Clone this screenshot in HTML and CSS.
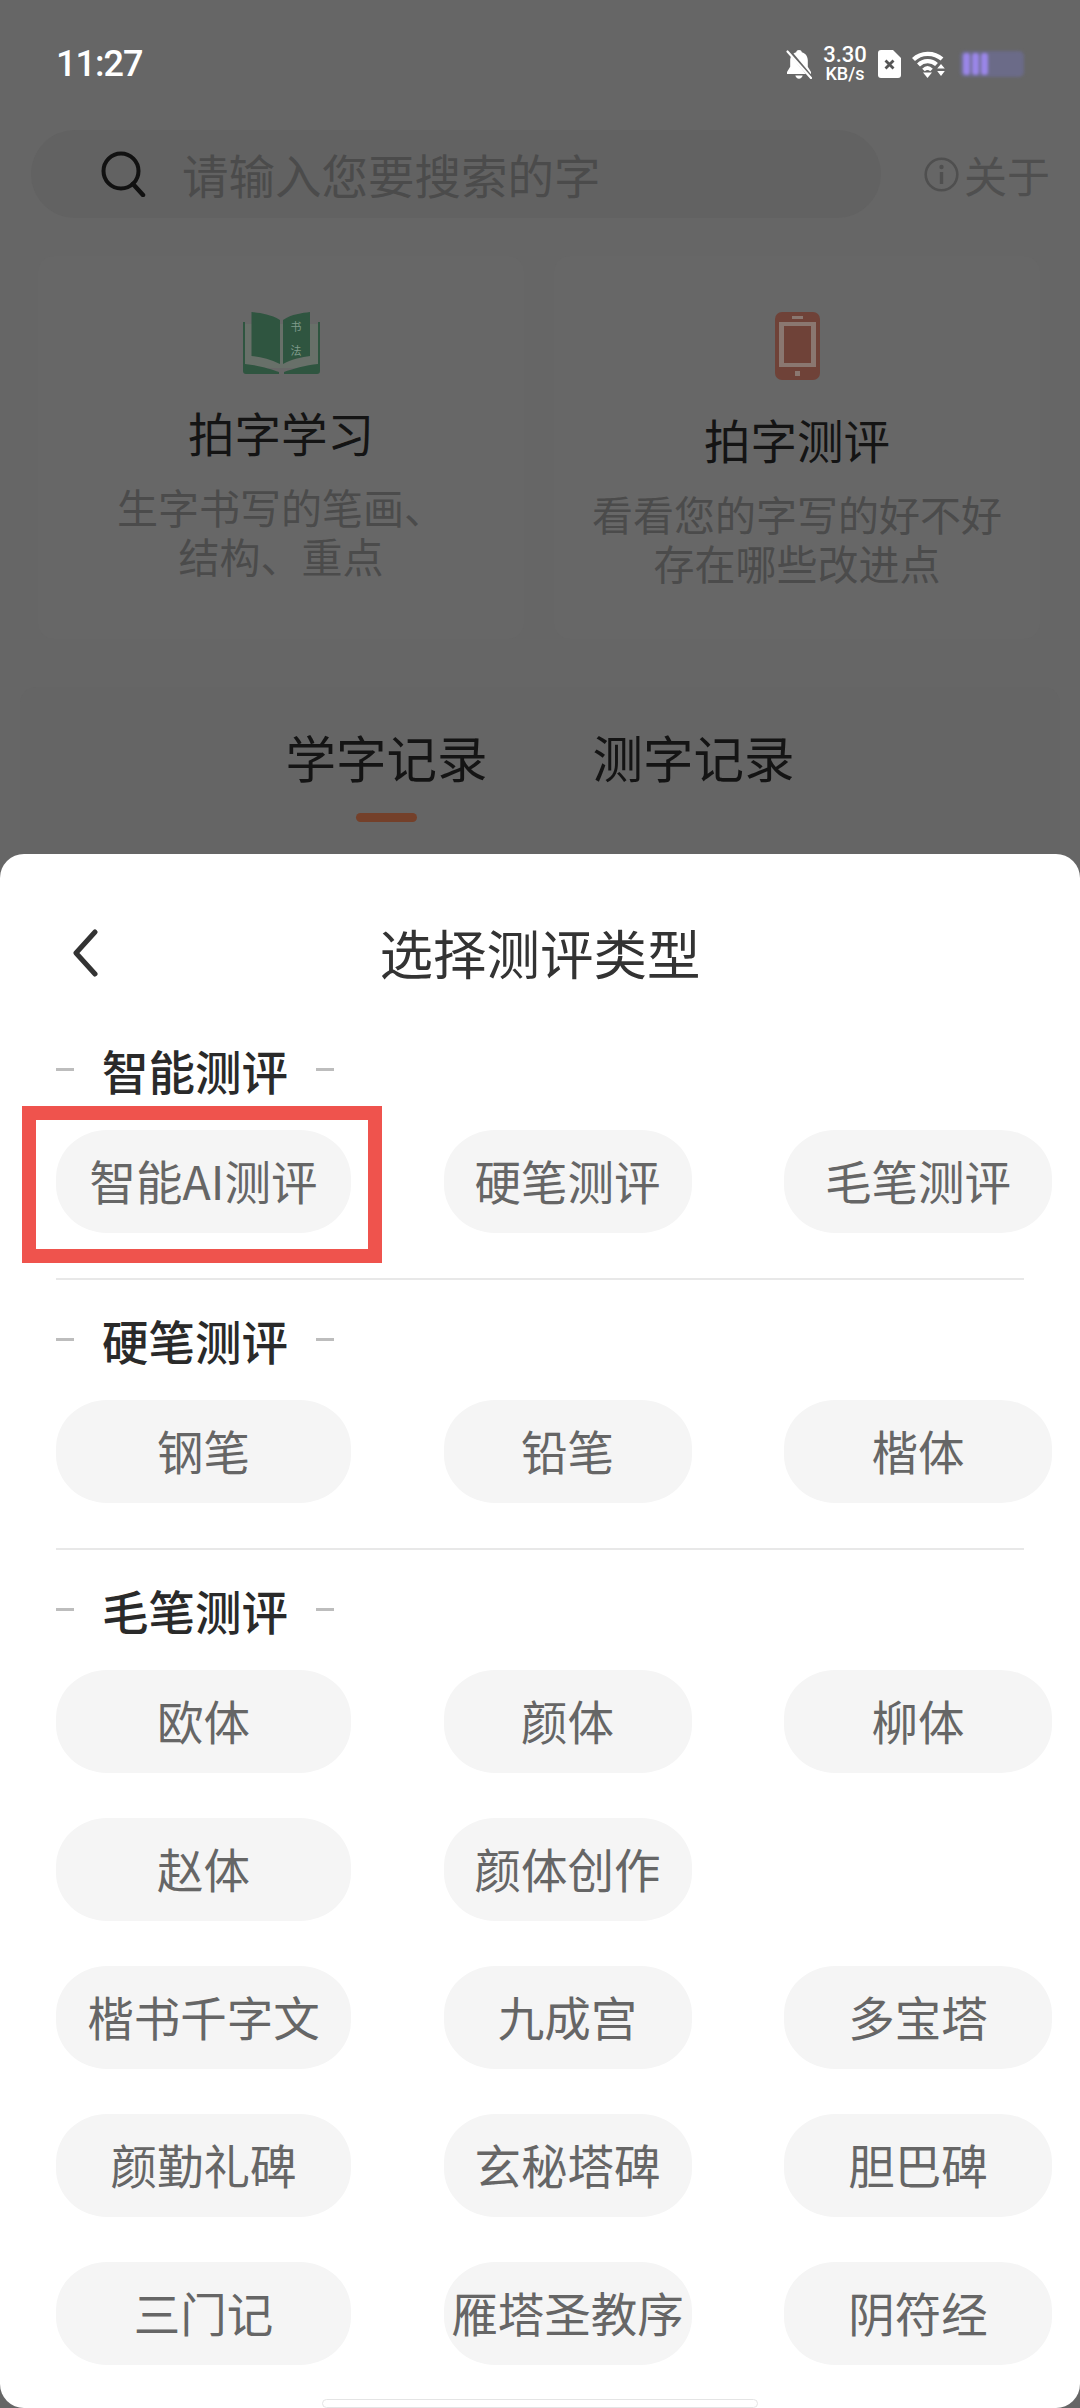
FILE: index.html
```html
<!DOCTYPE html>
<html lang="zh-CN">
<head>
    <meta charset="UTF-8">
    <meta name="viewport" content="width=device-width, initial-scale=1.0">
    <title>选择测评类型</title>
    <link rel="stylesheet" href="styles.css">
</head>
<body>
    <div class="screen">
        <div class="backdrop">
            <div class="status-bar">
                <span class="time">11:27</span>
                <div class="status-icons">
                    <svg class="icon-bell" viewBox="0 0 26 29">
                        <path d="M13 0c1.600 0 2.600.9 2.800 2.200 3.900 1.100 6 4.200 6 8.300v6.200l3.200 5.300v2H1v-2l3.200-5.300v-6.200c0-4.100 2.100-7.200 6-8.300C10.400.9 11.400 0 13 0z" fill="#fff"/>
                        <path d="M9.300 25.500h7.400c-.5 2-1.900 3.200-3.700 3.200s-3.200-1.200-3.700-3.200z" fill="#fff"/>
                        <path d="M3 1l22 26" stroke="#666" stroke-width="3.600"/>
                        <path d="M1.500 1.500l23.500 26.500" stroke="#fff" stroke-width="2.200" stroke-linecap="round"/>
                    </svg>
                    <div class="net-speed">
                        <span class="net-value">3.30</span>
                        <span class="net-unit">KB/s</span>
                    </div>
                    <svg class="icon-sim" viewBox="0 0 23 28">
                        <path d="M3 0h12l8 8v17a3 3 0 0 1-3 3H3a3 3 0 0 1-3-3V3a3 3 0 0 1 3-3z" fill="#fff"/>
                        <path d="M7.500 10.500l8 8m0-8l-8 8" stroke="#555" stroke-width="2.800"/>
                    </svg>
                    <svg class="icon-wifi" viewBox="0 0 33 27">
                        <path d="M1.500 8.500C9 1 22 1 30 8" fill="none" stroke="#fff" stroke-width="4.200"/>
                        <path d="M6.500 14C11.500 9 19.500 9 24.500 13.500" fill="none" stroke="#fff" stroke-width="4.200"/>
                        <path d="M11.500 19c2.500-2.400 5.500-2.400 8 0" fill="none" stroke="#fff" stroke-width="3.800"/>
                        <path d="M11 21.500h9l-4.500 5.500z" fill="#fff"/>
                        <path d="M29 13l3.800 4.600h-7.600zM25.200 20h7.600L29 25z" fill="#fff"/>
                    </svg>
                    <div class="battery">
                        <span class="battery-cell"></span>
                        <span class="battery-cell"></span>
                        <span class="battery-cell"></span>
                    </div>
                </div>
            </div>

            <div class="search-row">
                <div class="search-box">
                    <svg class="icon-search" viewBox="0 0 46 46">
                        <circle cx="21" cy="20" r="17.500" fill="none" stroke="#111" stroke-width="4"/>
                        <path d="M33 33l10 11" stroke="#111" stroke-width="4.500" stroke-linecap="round"/>
                    </svg>
                    <span class="search-text">请输入您要搜索的字</span>
                </div>
                <div class="about">
                    <svg class="icon-info" viewBox="0 0 35 35">
                        <circle cx="17.500" cy="17.500" r="15.800" fill="none" stroke="#4f4f4f" stroke-width="2.600"/>
                        <circle cx="17.500" cy="10" r="2.200" fill="#4f4f4f"/>
                        <path d="M17.500 15v12" stroke="#4f4f4f" stroke-width="3.400"/>
                    </svg>
                    <span>关于</span>
                </div>
            </div>

            <div class="cards">
                <div class="card">
                    <svg class="icon-book" viewBox="0 0 77 62">
                        <path d="M2 12h73v44H2z" fill="#687069"/>
                        <path d="M8.500 0C17 1 27 2 37 8v44C27 47 17 45 8.500 44z" fill="#2f5540"/>
                        <path d="M40 8C49 2 59 1 67 0v44c-8 1-18 3-27 8z" fill="#2f5540"/>
                        <path d="M0 10h2v42c12 1 26 5 34 8v2H3q-3 0-3-3z" fill="#2f5540"/>
                        <path d="M77 10h-2v42c-12 1-26 5-34 8v2h33q3 0 3-3z" fill="#2f5540"/>
                        <text class="book-label" x="53" y="19">书</text>
                        <text class="book-label" x="53" y="43">法</text>
                    </svg>
                    <div class="card-title">拍字学习</div>
                    <div class="card-desc">生字书写的笔画、<br>结构、重点</div>
                </div>
                <div class="card">
                    <svg class="icon-phone" viewBox="0 0 45 68">
                        <rect width="45" height="68" rx="7" fill="#6f4238"/>
                        <rect x="4" y="10" width="37" height="45" fill="#8a7770"/>
                        <rect x="9" y="14" width="27" height="37" fill="#6f4238"/>
                        <rect x="17" y="4" width="11" height="3" fill="#8a7770"/>
                        <rect x="20" y="59" width="5" height="5" fill="#8a7770"/>
                    </svg>
                    <div class="card-title">拍字测评</div>
                    <div class="card-desc">看看您的字写的好不好<br>存在哪些改进点</div>
                </div>
            </div>

            <div class="records">
                <div class="tab">
                    <span>学字记录</span>
                    <span class="tab-line"></span>
                </div>
                <div class="tab">
                    <span>测字记录</span>
                </div>
            </div>
        </div>

        <div class="sheet">
            <div class="sheet-header">
                <svg class="icon-back" viewBox="0 0 28 48">
                    <path d="M24 3L5 24l19 21" fill="none" stroke="#333" stroke-width="5" stroke-linecap="round" stroke-linejoin="round"/>
                </svg>
                <span>选择测评类型</span>
            </div>

            <div class="section">
                <div class="section-title">智能测评</div>
                <div class="pills">
                    <div class="pill">智能AI测评<span class="marker"></span></div>
                    <div class="pill">硬笔测评</div>
                    <div class="pill">毛笔测评</div>
                </div>
            </div>

            <div class="section">
                <div class="section-title">硬笔测评</div>
                <div class="pills">
                    <div class="pill">钢笔</div>
                    <div class="pill">铅笔</div>
                    <div class="pill">楷体</div>
                </div>
            </div>

            <div class="section section-last">
                <div class="section-title">毛笔测评</div>
                <div class="pills">
                    <div class="pill">欧体</div>
                    <div class="pill">颜体</div>
                    <div class="pill">柳体</div>
                    <div class="pill">赵体</div>
                    <div class="pill">颜体创作</div>
                    <div class="pill-empty"></div>
                    <div class="pill">楷书千字文</div>
                    <div class="pill">九成宫</div>
                    <div class="pill">多宝塔</div>
                    <div class="pill">颜勤礼碑</div>
                    <div class="pill">玄秘塔碑</div>
                    <div class="pill">胆巴碑</div>
                    <div class="pill">三门记</div>
                    <div class="pill">雁塔圣教序</div>
                    <div class="pill">阴符经</div>
                </div>
            </div>

            <div class="home-bar"></div>
        </div>
    </div>
</body>
</html>
```

FILE: styles.css
```css
* {
    box-sizing: border-box;
}

body {
    margin: 0;
    background-color: #4d4d4d;
    font-family: "Noto Sans CJK SC", "Noto Sans", sans-serif;
}

.screen {
    width: 1080px;
    height: 2408px;
    display: flex;
    flex-direction: column;
    overflow: hidden;
    background-color: #666;
}

.backdrop {
    height: 854px;
    flex: none;
    overflow: hidden;
}

/* status bar */
.status-bar {
    height: 130px;
    padding: 0 56px 2px;
    display: flex;
    align-items: center;
    justify-content: space-between;
    color: #fff;
}

.time {
    font-family: Roboto, sans-serif;
    font-size: 36px;
    font-weight: 500;
    letter-spacing: -1px;
}

.status-icons {
    display: flex;
    align-items: center;
    gap: 11px;
}

.icon-bell {
    width: 26px;
    height: 29px;
}

.net-speed {
    width: 44px;
    display: flex;
    flex-direction: column;
    align-items: center;
    font-family: Roboto, sans-serif;
    font-weight: 500;
}

.net-value {
    font-size: 22px;
    line-height: 20px;
}

.net-unit {
    font-size: 18px;
    line-height: 18px;
}

.icon-sim {
    width: 23px;
    height: 28px;
}

.icon-wifi {
    width: 33px;
    height: 27px;
}

.battery {
    width: 64px;
    height: 26px;
    margin-left: 4px;
    padding: 2px 3px;
    display: flex;
    gap: 2px;
    background-color: #6b6b88;
    border-radius: 5px;
    filter: blur(1.5px);
}

.battery-cell {
    width: 7px;
    background-color: #9a86e8;
    border-radius: 3px;
}

/* search */
.search-row {
    height: 88px;
    padding-left: 31px;
    display: flex;
    align-items: center;
    gap: 43px;
}

.search-box {
    width: 850px;
    height: 88px;
    padding-left: 69px;
    display: flex;
    align-items: center;
    gap: 36px;
    background-color: #626262;
    border-radius: 44px;
}

.icon-search {
    width: 46px;
    height: 46px;
}

.search-text {
    font-size: 46.5px;
    color: #4b4b4b;
    line-height: 48px;
}

.about {
    display: flex;
    align-items: center;
    gap: 5px;
    font-size: 43px;
    line-height: 50px;
    color: #4f4f4f;
}

.icon-info {
    width: 35px;
    height: 35px;
}

/* cards */
.cards {
    height: 383px;
    margin: 38px 40px 48px 38px;
    display: flex;
    gap: 30px;
}

.card {
    flex: 1;
    padding-top: 56px;
    display: flex;
    flex-direction: column;
    align-items: center;
    background-color: #676767;
    border-radius: 16px;
}

.icon-book {
    width: 77px;
    height: 62px;
    margin-bottom: 35px;
}

.icon-phone {
    width: 45px;
    height: 68px;
    margin-bottom: 36px;
}

.book-label {
    font-size: 11px;
    fill: #7f9a8a;
    text-anchor: middle;
}

.card-title {
    font-size: 46.5px;
    line-height: 46px;
    color: #141414;
    margin-bottom: 27px;
}

.card-desc {
    font-size: 41px;
    line-height: 49px;
    color: #4b4b4b;
    text-align: center;
}

/* records */
.records {
    height: 200px;
    margin: 0 20px;
    padding-top: 44px;
    display: flex;
    justify-content: center;
    gap: 105px;
    background-color: #656565;
    border-radius: 16px 16px 0 0;
}

.tab {
    display: flex;
    flex-direction: column;
    align-items: center;
    font-size: 50.5px;
    line-height: 50px;
    color: #141414;
}

.tab-line {
    width: 61px;
    height: 9px;
    margin-top: 32px;
    background-color: #74402a;
    border-radius: 5px;
}

/* bottom sheet */
.sheet {
    flex: 1;
    background-color: #fff;
    border-radius: 24px;
    display: flex;
    flex-direction: column;
}

.sheet-header {
    height: 192px;
    padding-top: 2px;
    position: relative;
    display: flex;
    align-items: center;
    justify-content: center;
    font-size: 53.5px;
    color: #333;
}

.icon-back {
    position: absolute;
    left: 71px;
    top: 75px;
    width: 28px;
    height: 48px;
}

.section {
    margin: 0 56px 36px;
    border-bottom: 2px solid #e8e8e8;
    padding-bottom: 45px;
}

.section-last {
    margin-bottom: 0;
    border-bottom: none;
    padding-bottom: 0;
}

.section-title {
    height: 46px;
    margin-bottom: 38px;
    display: flex;
    align-items: center;
    gap: 28px;
    font-size: 46.5px;
    color: #2a2a2a;
    font-weight: 500;
}

.section-title::before,
.section-title::after {
    content: "";
    width: 18px;
    height: 3px;
    background-color: #bdbdbd;
}

.pills {
    display: grid;
    grid-template-columns: 295px 248px 268px;
    column-gap: 92.5px;
    row-gap: 45px;
    margin-right: -28px;
}

.pill {
    height: 103px;
    padding-bottom: 5px;
    position: relative;
    display: flex;
    align-items: center;
    justify-content: center;
    font-size: 46.5px;
    color: #666;
    white-space: nowrap;
    background-color: #f5f5f5;
    border-radius: 51px / 48px;
}

/* red box drawn on top of the screenshot */
.marker {
    position: absolute;
    left: -34px;
    top: -24px;
    width: 360px;
    height: 157px;
    border: 14px solid #ef534d;
}

.home-bar {
    width: 436px;
    height: 9px;
    margin: 34px auto 0;
    background-color: #fff;
    border: 1px solid #e4e4e4;
    border-radius: 5px;
}
```
